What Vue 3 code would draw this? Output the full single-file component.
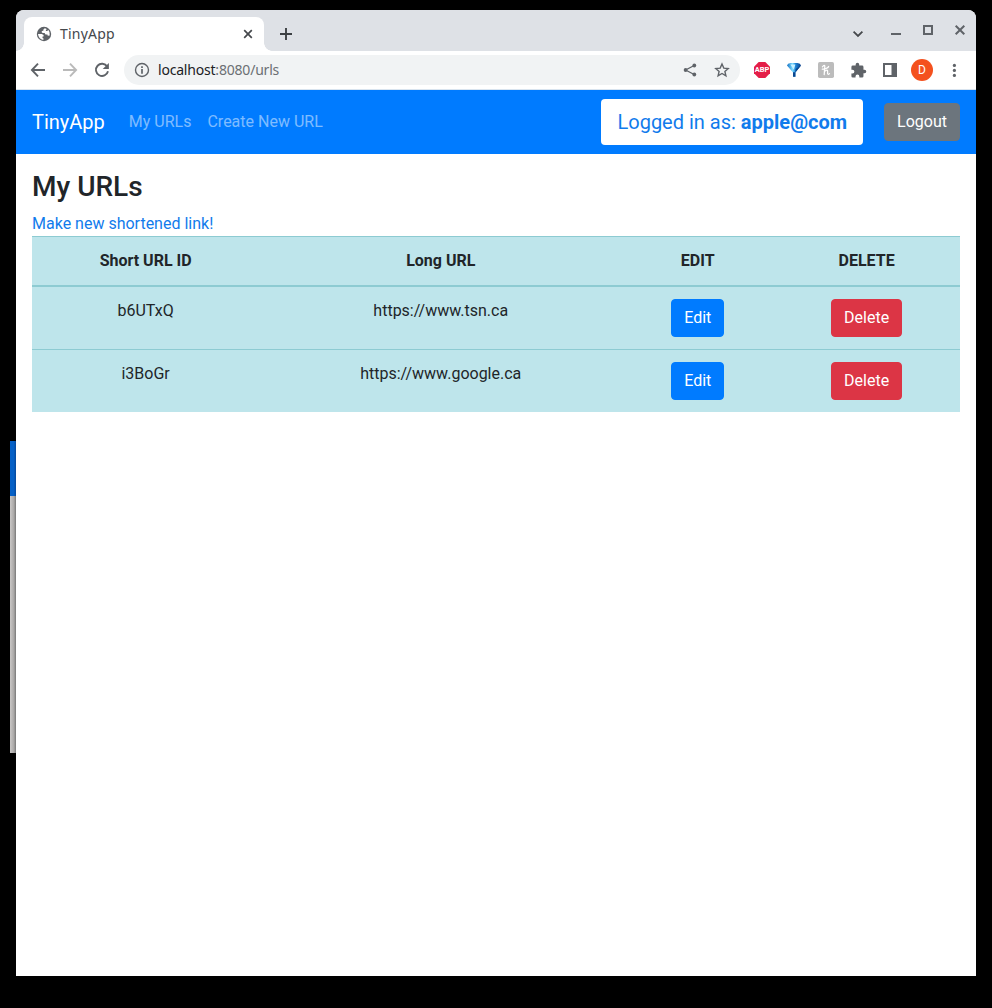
<script setup>
const urls = [
  { id: 'b6UTxQ', long: 'https://www.tsn.ca' },
  { id: 'i3BoGr', long: 'https://www.google.ca' },
]
</script>

<template>
  <div class="desktop">
    <div class="behind"><div class="behind-top"></div><div class="behind-body"></div></div>
    <div class="window">
      <div class="tabstrip">
        <div class="tab">
          <svg class="globe" width="16" height="16" viewBox="0 0 16 16"><circle cx="8" cy="8" r="7.2" fill="#5f6368" /><path d="M8.9 2.2Q7 3 7.3 4.7L5.8 5.1Q5.3 6.6 6.6 6.9L8.6 7 9.5 8.4 11.4 8.5 11.8 9.8 13.7 9.4Q14.5 6.3 12.2 3.8L11.4 5.1 9.7 4.9 10.6 3z" fill="#fff" /><path d="M2 8.1H5.6Q7.8 8.4 7.9 10.2L6.6 10.6 6.5 12 7.6 12.5 7.3 13.9Q2.5 13.3 2 8.1z" fill="#fff" /></svg>
          <span class="tab-title">TinyApp</span>
          <svg width="16" height="16" viewBox="0 0 16 16"><path d="M4.2 4.2l7.6 7.6M11.8 4.2l-7.6 7.6" stroke="#45484c" stroke-width="1.7" /></svg>
        </div>
        <svg class="plus" width="16" height="16" viewBox="0 0 16 16"><path d="M8 2v12M2 8h12" stroke="#3c4043" stroke-width="1.9" /></svg>
        <svg class="chev" width="16" height="16" viewBox="0 0 16 16"><path d="M3.6 5.6 8 10l4.4-4.4" fill="none" stroke="#45484c" stroke-width="1.8" /></svg>
        <div class="controls">
          <svg width="16" height="16" viewBox="0 0 16 16"><path d="M3 12h10" stroke="#5f6368" stroke-width="2" /></svg>
          <svg width="16" height="16" viewBox="0 0 16 16"><path d="M4 4h8v8H4z" fill="none" stroke="#5f6368" stroke-width="2" /></svg>
          <svg width="16" height="16" viewBox="0 0 16 16"><path d="M3.7 3.7l8.6 8.6M12.3 3.7l-8.6 8.6" stroke="#5f6368" stroke-width="2" /></svg>
        </div>
      </div>
      <div class="toolbar">
        <div class="cell"><svg width="16" height="16" viewBox="0 0 16 16"><path d="M8 1.6 1.9 8 8 14.4M2 8h13" fill="none" stroke="#5f6368" stroke-width="1.9" /></svg></div>
        <div class="cell"><svg width="16" height="16" viewBox="0 0 16 16"><path d="M8 1.6 14.1 8 8 14.4M14 8H1" fill="none" stroke="#bababa" stroke-width="1.9" /></svg></div>
        <div class="cell"><svg width="16" height="16" viewBox="0 0 16 16"><path d="M13.2 4.6A6.1 6.1 0 1 0 14 9.3" fill="none" stroke="#5f6368" stroke-width="1.9" /><path d="M14.9.9v6.2H8.7z" fill="#5f6368" /></svg></div>
        <div class="omnibox">
          <svg width="16" height="16" viewBox="0 0 16 16"><circle cx="8" cy="8" r="6.5" fill="none" stroke="#5f6368" stroke-width="1.4" /><path d="M8 7v4.7M8 4.2v1.7" stroke="#5f6368" stroke-width="1.7" /></svg>
          <span class="address"><b>localhost</b>:8080/urls</span>
          <div class="cell"><svg width="16" height="16" viewBox="0 0 16 16"><path d="M12.2 3.5 3.6 8l8.6 4.5" fill="none" stroke="#5f6368" stroke-width="1.3" /><g fill="#5f6368"><circle cx="12.3" cy="3.5" r="1.9" /><circle cx="3.6" cy="8" r="1.9" /><circle cx="12.3" cy="12.5" r="1.9" /></g></svg></div>
          <div class="cell"><svg width="16" height="16" viewBox="0 0 16 16"><path d="M8 2 9.8 6.1 14.2 6.5 10.9 9.4 11.9 13.8 8 11.5 4.1 13.8 5.1 9.4 1.8 6.5 6.2 6.1z" fill="none" stroke="#5f6368" stroke-width="1.4" /></svg></div>
        </div>
        <div class="cell"><span class="abp">ABP</span></div>
        <div class="cell">
          <svg width="16" height="16" viewBox="0 0 16 16">
            <defs><linearGradient id="funnel" x1="0" x2="1" y1="0" y2="0"><stop offset="0" stop-color="#1471c4" /><stop offset=".4" stop-color="#7fdcff" /><stop offset=".6" stop-color="#1f86d8" /><stop offset="1" stop-color="#0a3f88" /></linearGradient></defs>
            <path d="M1 3.4Q1.5 1.2 4.5 1.1h7Q14.5 1.2 15 3.4L9.4 10.4v4.3H7v-4.3z" fill="url(#funnel)" /><path d="M7 10.2h2.4v4.5H7zM15 3.4 9.4 10.4 9.6 7z" fill="#0b478e" /><path d="M4.4 2.6h5L7.8 7.8z" fill="#c8f1ff" />
          </svg>
        </div>
        <div class="cell"><svg width="16" height="16" viewBox="0 0 16 16"><rect width="16" height="16" rx="1.7" fill="#bcbcbc" /><path d="M4.4 4.8Q6.8 2 6.8 4.4L6.2 12.6M6.5 9.6Q9.6 7 9.6 9.2V11.6Q10 13 11.5 11.6M4.3 7.2Q9.8 6.8 10.6 4.5" fill="none" stroke="#fff" stroke-width="1.25" stroke-linecap="round" /></svg></div>
        <div class="cell"><svg width="17" height="17" viewBox="0 0 24 24"><path fill="#5f6368" d="M20.5 11H19V7a2 2 0 0 0-2-2h-4V3.5a2.5 2.5 0 0 0-5 0V5H4a2 2 0 0 0-2 2v3.8h1.5a2.7 2.7 0 0 1 0 5.4H2V20a2 2 0 0 0 2 2h3.8v-1.5a2.7 2.7 0 0 1 5.4 0V22H17a2 2 0 0 0 2-2v-4h1.5a2.5 2.5 0 0 0 0-5z" /></svg></div>
        <div class="cell"><svg width="14" height="14" viewBox="0 0 14 14"><path fill="#5f6368" fill-rule="evenodd" d="M0 0h14v14H0zM2 2v10h6.5V2z" /></svg></div>
        <div class="cell"><span class="avatar">D</span></div>
        <div class="cell"><svg width="16" height="16" viewBox="0 0 16 16" fill="#5f6368"><circle cx="8.4" cy="3.4" r="1.6" /><circle cx="8.4" cy="8.4" r="1.6" /><circle cx="8.4" cy="13.4" r="1.6" /></svg></div>
      </div>
      <nav class="navbar">
        <a class="brand">TinyApp</a>
        <a class="link">My URLs</a>
        <a class="link">Create New URL</a>
        <div class="user">Logged in as: <b>apple@com</b></div>
        <button class="btn grey">Logout</button>
      </nav>
      <main>
        <h3>My URLs</h3>
        <a class="make">Make new shortened link!</a>
        <table>
          <colgroup><col class="c1" /><col class="c2" /><col class="c3" /><col class="c4" /></colgroup>
          <thead><tr><th>Short URL ID</th><th>Long URL</th><th>EDIT</th><th>DELETE</th></tr></thead>
          <tbody>
            <tr v-for="u in urls" :key="u.id">
              <td>{{ u.id }}</td>
              <td>{{ u.long }}</td>
              <td><button class="btn blue">Edit</button></td>
              <td><button class="btn red">Delete</button></td>
            </tr>
          </tbody>
        </table>
      </main>
    </div>
  </div>
</template>

<style>
body { margin: 0; background: #000; }
</style>

<style scoped>
* { box-sizing: border-box; }
svg { display: block; flex: none; }
.desktop { display: flex; width: 992px; height: 1008px; padding: 10px 0 0 10px; background: #000; overflow: hidden; font: 16px/24px Roboto, sans-serif; color: #212529; }
.behind { width: 6px; padding-top: 431px; }
.behind-top { height: 55px; background: linear-gradient(90deg, #0560c6 60%, #06489a); }
.behind-body { height: 257px; background: linear-gradient(90deg, #c9c7c6, #aaa8a7 65%, #777); }
.window { width: 960px; height: 966px; background: #fff; border-radius: 8px 8px 0 0; overflow: hidden; }
.tabstrip { height: 41px; display: flex; align-items: flex-start; background: #dee1e6; padding-left: 8px; }
.tab { position: relative; width: 240px; height: 34px; margin-top: 7px; padding: 0 8px 0 12px; display: flex; align-items: center; background: #fff; border-radius: 8px 8px 0 0; }
.tab::before, .tab::after { content: ""; position: absolute; bottom: 0; width: 8px; height: 8px; }
.tab::before { left: -8px; background: radial-gradient(circle at 0 0, transparent 7.5px, #fff 8px); }
.tab::after { right: -8px; background: radial-gradient(circle at 100% 0, transparent 7.5px, #fff 8px); }
.tab-title { flex: 1; margin-left: 8px; font: 14px/20px "Noto Sans", sans-serif; letter-spacing: .2px; color: #45484c; }
.plus { margin: 16px 0 0 14px; }
.chev { margin: 16px 0 0 auto; }
.controls { display: flex; gap: 16px; margin: 12px 8px 0 22px; }
.toolbar { height: 39px; display: flex; align-items: center; padding: 0 6px; border-bottom: 1px solid #d9e4ef; }
.cell { width: 32px; height: 32px; display: flex; flex: none; align-items: center; justify-content: center; }
.omnibox { width: 616px; height: 30px; margin: 0 6px; border-radius: 15px; background: #f1f3f4; display: flex; align-items: center; padding: 0 2px 0 10px; }
.address { flex: 1; margin-left: 8px; font: 14px/20px "Noto Sans", sans-serif; letter-spacing: -.2px; color: #6b6f73; }
.address b { font-weight: 400; color: #202124; }
.abp { width: 16px; height: 16px; font: bold 7.5px/16px Roboto, sans-serif; letter-spacing: -.1px; text-align: center; color: #fff; background: linear-gradient(45deg, transparent 3.3px, #e41e48 3.4px calc(100% - 3.4px), transparent calc(100% - 3.3px)) left / 8px 100% no-repeat; background: #e41e48; clip-path: polygon(4.7px 0, 11.3px 0, 16px 4.7px, 16px 11.3px, 11.3px 16px, 4.7px 16px, 0 11.3px, 0 4.7px); }
.avatar { width: 22px; height: 22px; border-radius: 50%; background: #f4511e; color: #fff; font-size: 12px; line-height: 22px; text-align: center; }
.navbar { height: 64px; display: flex; align-items: center; padding: 0 16px; background: #007bff; }
.brand { font-size: 20px; line-height: 30px; color: #fff; margin-right: 16px; }
.link { padding: 0 8px; color: rgba(255, 255, 255, .5); }
.user { margin-left: auto; margin-right: 21px; padding: 8px 16px; font-size: 20px; line-height: 30px; border-radius: 4px; background: #fff; color: #117bec; }
.user b { font-weight: 700; }
.btn { height: 38px; padding: 6px 12px; border: 1px solid; border-radius: 4px; font: 16px/24px Roboto, sans-serif; color: #fff; }
.grey { background: #6c757d; border-color: #6c757d; }
.blue { background: #007bff; border-color: #007bff; }
.red { background: #dc3545; border-color: #dc3545; }
main { padding: 16px; }
h3 { margin: 0 0 8px; font-size: 28px; line-height: 33.6px; font-weight: 500; }
.make { display: block; color: #117bec; }
table { width: 928px; table-layout: fixed; border-collapse: collapse; text-align: center; background: #bee5eb; }
.c1 { width: 227.25px; }
.c2 { width: 363px; }
.c3 { width: 151px; }
.c4 { width: 186.75px; }
th, td { padding: 12px; vertical-align: top; border-top: 1px solid #8dcbd2; }
th { font-weight: 700; border-bottom: 2px solid #8dcbd2; }
td .btn { display: inline-block; vertical-align: top; }
</style>
